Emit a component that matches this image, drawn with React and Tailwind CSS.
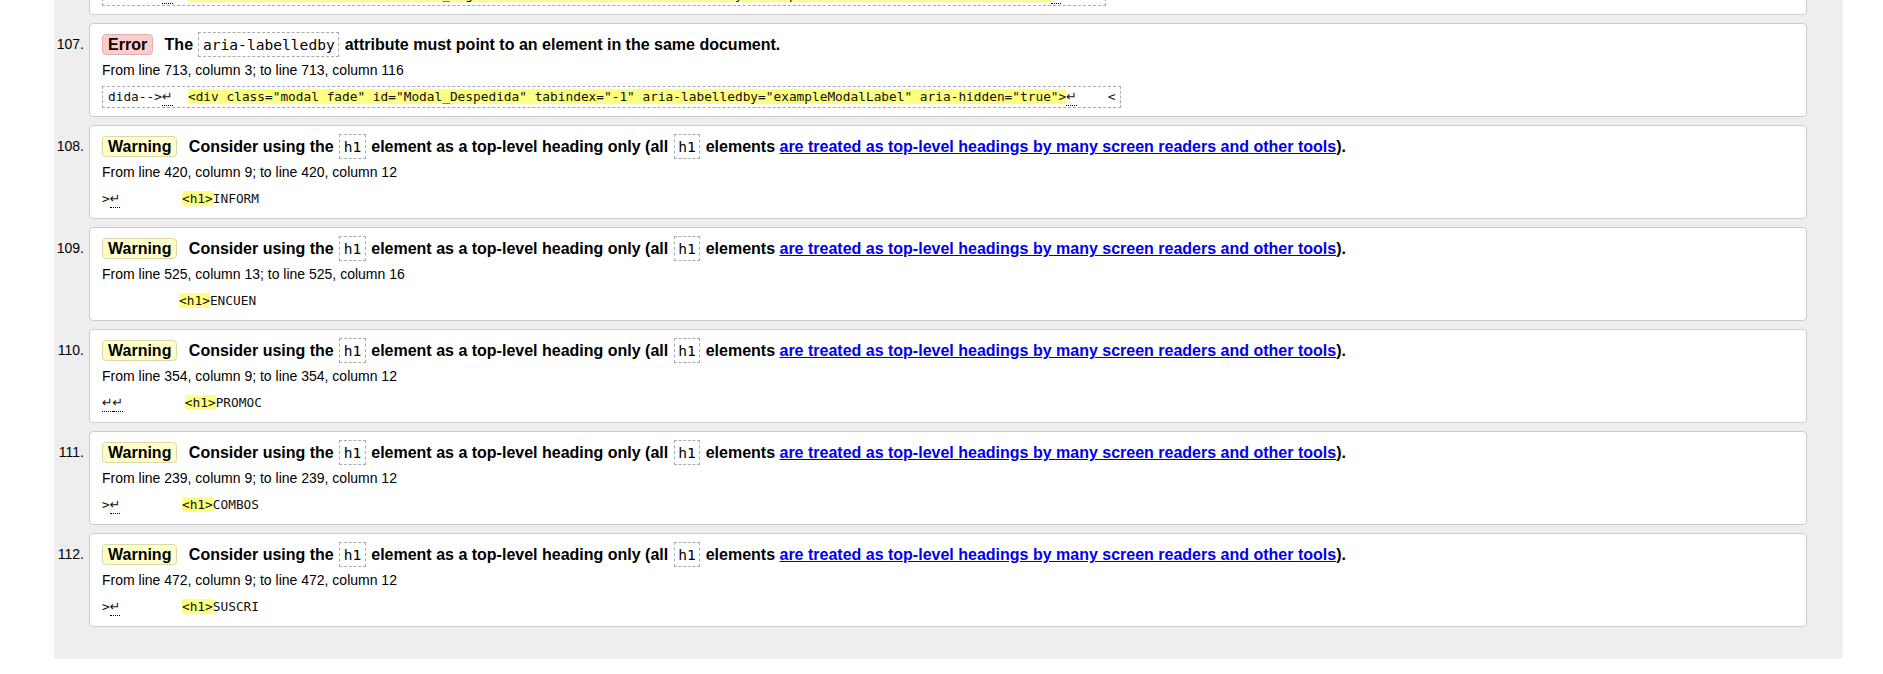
import React from "react";

// fonts: Liberation Sans ~ Arial, DejaVu Sans Mono for code extracts
const sans = "font-['Liberation_Sans',Arial,sans-serif]";
const mono = "font-['DejaVu_Sans_Mono',monospace]";

const Ret = () => (
  <span className="inline-block w-[10.6px] -mb-px border-b border-dotted border-black font-['DejaVu_Sans',sans-serif]">↵</span>
);

const Hi = ({ children }) => <span className="bg-[#ffff80]">{children}</span>;

const Code = ({ children }) => (
  <code className={`${mono} mx-[1px] border border-dashed border-[#aaa] px-[3.5px] py-[3px] text-[14.6px] font-normal leading-none`}>
    {children}
  </code>
);

const Badge = ({ kind }) =>
  kind === "error" ? (
    <span className="mr-[7px] inline-block rounded-[4px] border border-[#e0b0b0] bg-[#fcc] px-[5px] leading-[19px]">Error</span>
  ) : (
    <span className="mr-[7px] inline-block rounded-[4px] border border-[#dcd8a8] bg-[#ffc] px-[5px] leading-[19px]">Warning</span>
  );

const H1Title = () => (
  <>
    Consider using the <Code>h1</Code> element as a top-level heading only (all <Code>h1</Code> elements{" "}
    <a href="#" className="text-[#00e] underline">
      are treated as top-level headings by many screen readers and other tools
    </a>
    ).
  </>
);

function Extract({ boxed, children }) {
  return (
    <div
      className={`${mono} mt-[6px] w-fit whitespace-pre text-[12.8px] leading-[16px] text-[#111] ${
        boxed ? "border border-dashed border-[#aaa] px-[5px] py-[2px]" : "py-[3px]"
      }`}
    >
      {children}
    </div>
  );
}

function Item({ n, kind, title, loc, children, boxed }) {
  return (
    <li className="flex items-start">
      <div className="w-[35px] shrink-0 pr-[5px] pt-[11px] text-right text-[14px] leading-[21px]">{n}.</div>
      <div className="flex-1 rounded-[4px] border border-[#ccc] bg-white px-[12px] pt-[10px] pb-[8px]">
        <div className="text-[16px] font-bold leading-[21px]">
          <Badge kind={kind} /> {title}
        </div>
        <div className="mt-[5px] text-[14px] leading-[20px]">{loc}</div>
        <Extract boxed={boxed}>{children}</Extract>
      </div>
    </li>
  );
}

const warnings = [
  { n: 108, line: 420, c1: 9, c2: 12, pre: ">", rets: 1, sp: 8, txt: "INFORM" },
  { n: 109, line: 525, c1: 13, c2: 16, pre: "", rets: 0, sp: 10, txt: "ENCUEN" },
  { n: 110, line: 354, c1: 9, c2: 12, pre: "", rets: 2, sp: 8, txt: "PROMOC" },
  { n: 111, line: 239, c1: 9, c2: 12, pre: ">", rets: 1, sp: 8, txt: "COMBOS" },
  { n: 112, line: 472, c1: 9, c2: 12, pre: ">", rets: 1, sp: 8, txt: "SUSCRI" },
];

export default function App() {
  return (
    <div className={`${sans} h-[674px] overflow-hidden bg-white text-black`}>
      <ol className="ml-[54px] mt-[-79px] flex w-[1789px] flex-col gap-[8px] rounded-b-[4px] bg-[#eee] pr-[36px] pb-[32px]">
        <Item
          n={106}
          kind="error"
          boxed
          title={
            <>
              The <Code>aria-labelledby</Code> attribute must point to an element in the same document.
            </>
          }
          loc="From line 690, column 3; to line 690, column 113"
        >
          {"reso-->"}
          <Ret />
          {"  "}
          <Hi>{'<div class="modal fade" id="Modal_Ingreso" tabindex="-1" aria-labelledby="exampleModalLabel" aria-hidden="true">'}</Hi>
          <Ret />
          {"    <"}
        </Item>
        <Item
          n={107}
          kind="error"
          boxed
          title={
            <>
              The <Code>aria-labelledby</Code> attribute must point to an element in the same document.
            </>
          }
          loc="From line 713, column 3; to line 713, column 116"
        >
          {"dida-->"}
          <Ret />
          {"  "}
          <Hi>{'<div class="modal fade" id="Modal_Despedida" tabindex="-1" aria-labelledby="exampleModalLabel" aria-hidden="true">'}</Hi>
          <Ret />
          {"    <"}
        </Item>
        {warnings.map((w) => (
          <Item
            key={w.n}
            n={w.n}
            kind="warning"
            title={<H1Title />}
            loc={`From line ${w.line}, column ${w.c1}; to line ${w.line}, column ${w.c2}`}
          >
            {w.pre}
            {w.rets > 0 && <Ret />}
            {w.rets > 1 && <Ret />}
            {" ".repeat(w.sp)}
            <Hi>{"<h1>"}</Hi>
            {w.txt}
          </Item>
        ))}
      </ol>
    </div>
  );
}
